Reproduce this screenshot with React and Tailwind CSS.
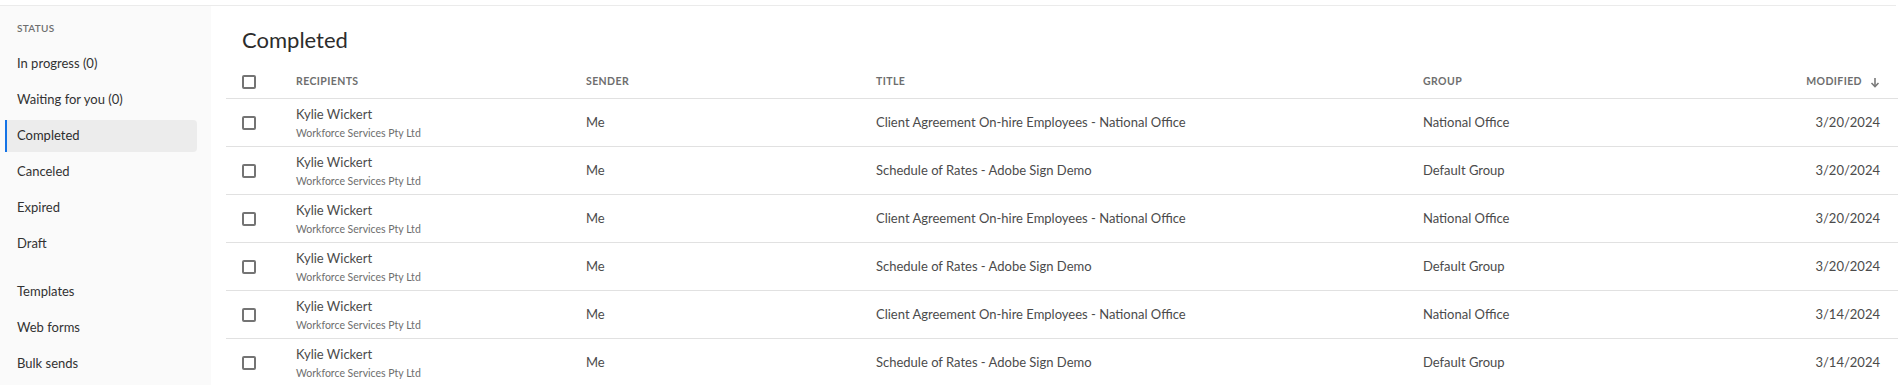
import React from "react";

const statusItems = [
  { label: "In progress (0)" },
  { label: "Waiting for you (0)" },
  { label: "Completed", active: true },
  { label: "Canceled" },
  { label: "Expired" },
  { label: "Draft" },
];

const otherItems = ["Templates", "Web forms", "Bulk sends"];

const rows = [
  { title: "Client Agreement On-hire Employees - National Office", group: "National Office", date: "3/20/2024" },
  { title: "Schedule of Rates - Adobe Sign Demo", group: "Default Group", date: "3/20/2024" },
  { title: "Client Agreement On-hire Employees - National Office", group: "National Office", date: "3/20/2024" },
  { title: "Schedule of Rates - Adobe Sign Demo", group: "Default Group", date: "3/20/2024" },
  { title: "Client Agreement On-hire Employees - National Office", group: "National Office", date: "3/14/2024" },
  { title: "Schedule of Rates - Adobe Sign Demo", group: "Default Group", date: "3/14/2024" },
];

const cols = "grid grid-cols-[54px_290px_290px_547px_1fr_140px] items-center pl-[16px] pr-[18px]";

const Checkbox = () => (
  <span className="block w-[14px] h-[14px] border-2 border-[#747474] rounded-[2px] bg-white" />
);

const SideItem = ({ label, active }) => (
  <div
    className={
      "flex items-center h-[32px] mb-[4px] ml-[5px] mr-[14px] pl-[10px] border-l-2 rounded-r-[4px] text-[13px] " +
      (active ? "border-[#1473e6] bg-[#ececec] text-[#2c2c2c]" : "border-transparent text-[#323232]")
    }
  >
    {label}
  </div>
);

export default function App() {
  return (
    <div className="w-full h-[385px] overflow-hidden bg-white pt-[5px] font-['Lato','Liberation_Sans',sans-serif]">
      <div className="flex h-full border-t border-[#ebebeb] mr-[2px]">
        {/* Sidebar */}
        <aside className="w-[211px] shrink-0 bg-[#fafafa] pt-[14px]">
          <div className="h-[16px] leading-[16px] mb-[12px] pl-[17px] text-[10px] font-semibold tracking-[0.3px] text-[#6e6e6e]">
            STATUS
          </div>
          {statusItems.map((it) => (
            <SideItem key={it.label} label={it.label} active={it.active} />
          ))}
          <div className="h-[12px]" />
          {otherItems.map((l) => (
            <SideItem key={l} label={l} />
          ))}
        </aside>

        {/* Main */}
        <main className="flex-1 pl-[15px] pt-[18px] -mr-[2px]">
          <h1 className="h-[32px] leading-[32px] mb-[10px] pl-[16px] text-[22px] text-[#2c2c2c]">Completed</h1>

          <div className={cols + " h-[33px] border-b border-[#e1e1e1] text-[10.5px] font-bold tracking-[0.4px] text-[#6e6e6e]"}>
            <Checkbox />
            <div>RECIPIENTS</div>
            <div>SENDER</div>
            <div>TITLE</div>
            <div>GROUP</div>
            <div className="flex items-center justify-end gap-[8px]">
              <span>MODIFIED</span>
              <svg width="10" height="11" viewBox="0 0 10 11" fill="none" stroke="#7a7a7a" strokeWidth="1.6">
                <path d="M5 1v8.5" />
                <path d="M1.5 6l3.5 3.5L8.5 6" />
              </svg>
            </div>
          </div>

          {rows.map((r, i) => (
            <div key={i} className={cols + " h-[48px] border-b border-[#e1e1e1] text-[13px] text-[#4b4b4b]"}>
              <Checkbox />
              <div className="flex flex-col">
                <span className="leading-[20px]">Kylie Wickert</span>
                <span className="leading-[16px] mt-[1px] text-[10.5px] text-[#6e6e6e]">Workforce Services Pty Ltd</span>
              </div>
              <div>Me</div>
              <div>{r.title}</div>
              <div>{r.group}</div>
              <div className="text-right">{r.date}</div>
            </div>
          ))}
        </main>
      </div>
    </div>
  );
}
